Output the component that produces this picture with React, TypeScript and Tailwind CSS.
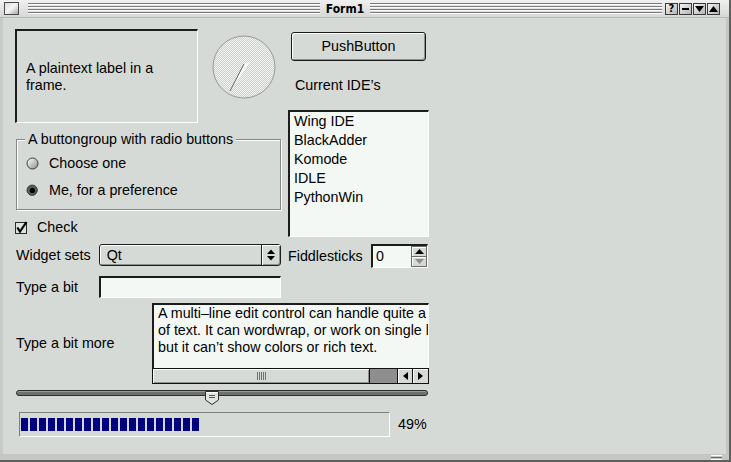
import React from 'react';

const sunken = 'border-t-2 border-l-2 border-b border-r border-t-[#1c1c1c] border-l-[#1c1c1c] border-b-white border-r-white';

function Stripes() {
  return (
    <div className="flex-1 h-[12px] bg-[image:repeating-linear-gradient(to_bottom,#7a7a7a_0px,#7a7a7a_1px,#fbfbfb_1px,#fbfbfb_2px,transparent_2px,transparent_3px)]" />
  );
}

function TitleButton({ children }: { children: React.ReactNode }) {
  return (
    <div className="w-[13px] h-[12px] border border-[#3a3a3a] bg-gradient-to-br from-[#f4f4f4] to-[#b4b4b4] flex items-center justify-center">
      {children}
    </div>
  );
}

function TitleBar() {
  return (
    <div className="h-[18px] flex items-center pl-[4px] pr-[9px] bg-gradient-to-b from-[#f0f0f0] to-[#d6d8d6] border-b border-[#b8bab8]">
      <div className="w-[15px] h-[13px] border border-[#4a4a4a] bg-gradient-to-br from-[#dcdcdc] via-[#f4f4f4] to-[#a8a8a8]" />
      <div className="ml-[9px] flex-1 flex items-center">
        <Stripes />
        <span className="mx-[6px] font-['DejaVu_Sans_Condensed','DejaVu_Sans',sans-serif] font-bold text-[12px] leading-[14px] [font-stretch:condensed]">
          Form1
        </span>
        <Stripes />
      </div>
      <div className="ml-[3px] flex gap-[1px]">
        <TitleButton>
          <span className="text-[10px] leading-[10px] font-bold font-['DejaVu_Sans',sans-serif]">?</span>
        </TitleButton>
        <TitleButton>
          <div className="w-[7px] h-[2px] bg-black" />
        </TitleButton>
        <TitleButton>
          <svg width="9" height="6" viewBox="0 0 9 6"><path d="M0 0 H9 L4.5 6 Z" fill="#000" /></svg>
        </TitleButton>
        <TitleButton>
          <svg width="9" height="6" viewBox="0 0 9 6"><path d="M0 6 H9 L4.5 0 Z" fill="#000" /></svg>
        </TitleButton>
      </div>
    </div>
  );
}

function Dial() {
  return (
    <svg width="64" height="64" viewBox="0 0 64 64">
      <defs>
        <pattern id="dialhatch" width="2" height="2" patternUnits="userSpaceOnUse">
          <rect width="2" height="2" fill="#f2f4f2" />
          <rect width="1" height="1" fill="#cdd1cd" />
          <rect x="1" y="1" width="1" height="1" fill="#cdd1cd" />
        </pattern>
      </defs>
      <circle cx="32" cy="32" r="31" fill="url(#dialhatch)" stroke="#8e908e" strokeWidth="0.9" />
      <polygon points="32,29 38,27 18,56" fill="#fafafa" />
      <line x1="32" y1="29" x2="18" y2="56" stroke="#555" strokeWidth="0.9" />
    </svg>
  );
}

function Radio({ checked }: { checked?: boolean }) {
  return (
    <svg width="13" height="13" viewBox="0 0 13 13">
      <defs>
        <linearGradient id="radioOff" x1="0" y1="0" x2="1" y2="1">
          <stop offset="0" stopColor="#ffffff" />
          <stop offset="1" stopColor="#8e8e8e" />
        </linearGradient>
      </defs>
      {checked ? (
        <>
          <circle cx="6.5" cy="6.5" r="5.8" fill="#ffffff" />
          <circle cx="6.2" cy="6.2" r="5.2" fill="#5c5c5c" stroke="#1e1e1e" strokeWidth="0.8" />
          <circle cx="6.4" cy="6.4" r="2.6" fill="#000" />
        </>
      ) : (
        <circle cx="6.5" cy="6.5" r="5.5" fill="url(#radioOff)" stroke="#2a2a2a" strokeWidth="0.9" />
      )}
    </svg>
  );
}

function CheckBox() {
  return (
    <svg width="13" height="13" viewBox="0 0 13 13">
      <rect x="0.5" y="1.5" width="11" height="11" fill="#dfe3df" stroke="#2a2a2a" />
      <path d="M2.3 6.5 L5 10.5 L11.5 1" stroke="#000" strokeWidth="2.2" fill="none" />
    </svg>
  );
}

function ComboBox() {
  return (
    <div className="w-[183px] h-[22px] rounded-[3px] border border-[#1e1e1e] flex shadow-[inset_1px_1px_0_#fff,inset_-1px_-1px_0_#8e908e]">
      <div className="flex-1 pl-[7px] flex items-center">Qt</div>
      <div className="w-[19px] border-l border-[#1e1e1e] flex items-center justify-center shadow-[inset_1px_1px_0_#fff]">
        <svg width="8" height="12" viewBox="0 0 8 12">
          <path d="M0 5 H8 L4 0.5 Z" fill="#000" />
          <path d="M0 7 H8 L4 11.5 Z" fill="#000" />
        </svg>
      </div>
    </div>
  );
}

function SpinBox() {
  return (
    <div className="w-[57px] h-[24px] flex border-t-2 border-l-2 border-t-[#1c1c1c] border-l-[#1c1c1c] border-b border-r border-b-white border-r-white bg-[#f4f8f4]">
      <div className="flex-1 pl-[3px] flex items-center">0</div>
      <div className="w-[16px] flex flex-col">
        <div className="flex-1 border border-[#6a6a6a] bg-[#d6dad6] shadow-[inset_1px_1px_0_#fff] flex items-center justify-center">
          <svg width="9" height="5" viewBox="0 0 9 5"><path d="M0 5 H9 L4.5 0 Z" fill="#000" /></svg>
        </div>
        <div className="flex-1 border border-t-0 border-[#6a6a6a] bg-[#d6dad6] shadow-[inset_1px_1px_0_#fff] flex items-center justify-center">
          <svg width="9" height="5" viewBox="0 0 9 5"><path d="M0 0 H9 L4.5 5 Z" fill="#8c8c8c" /></svg>
        </div>
      </div>
    </div>
  );
}

function HScrollBar() {
  return (
    <div className="h-[16px] flex border border-[#111] bg-[#d6dad6]">
      <div className="w-[217px] flex items-center justify-center shadow-[inset_1px_1px_0_#fff,inset_-1px_-1px_0_#8e908e] border-r border-[#111]">
        <div className="flex gap-[1px]">
          {[0, 1, 2, 3, 4].map((i) => (
            <div key={i} className="w-[1px] h-[8px] bg-[#707070]" />
          ))}
        </div>
      </div>
      <div className="w-[27px] bg-[#8e8e8e]" />
      <div className="w-[15px] border-l border-[#111] flex items-center justify-center shadow-[inset_1px_1px_0_#fff]">
        <svg width="5" height="8" viewBox="0 0 5 8"><path d="M5 0 V8 L0 4 Z" fill="#000" /></svg>
      </div>
      <div className="flex-1 border-l border-[#111] flex items-center justify-center shadow-[inset_1px_1px_0_#fff]">
        <svg width="5" height="8" viewBox="0 0 5 8"><path d="M0 0 V8 L5 4 Z" fill="#000" /></svg>
      </div>
    </div>
  );
}

function Slider() {
  return (
    <div className="relative ml-[1px] w-[412px] h-[16px]">
      <div className="mt-[5px] h-[6px] rounded-full border border-[#2e2e2e] bg-[#6e706e] shadow-[inset_0_1px_0_#9a9a9a]" />
      {/* handle sits on top of the groove */}
      <svg className="absolute left-[188px] top-0" width="16" height="16" viewBox="0 0 16 16">
        <path d="M1.5 1.5 H14.5 V10 L8 14.5 L1.5 10 Z" fill="#e2e4e2" stroke="#2e2e2e" />
        <path d="M2.5 2.5 H13.5" stroke="#fff" />
        <line x1="5" y1="5.5" x2="11" y2="5.5" stroke="#555" />
        <line x1="5" y1="7.5" x2="11" y2="7.5" stroke="#555" />
      </svg>
    </div>
  );
}

function ProgressBar() {
  const chunks = Array.from({ length: 20 });
  return (
    <div className="flex items-center">
      <div className="ml-[4px] w-[371px] h-[25px] border border-t-[#7e807e] border-l-[#7e807e] border-b-white border-r-white flex items-center pl-[1px]">
        <div className="flex gap-[2px]">
          {chunks.map((_, i) => (
            <div key={i} className="w-[7px] h-[13px] bg-[#000080]" />
          ))}
        </div>
      </div>
      <span className="ml-[8px]">49%</span>
    </div>
  );
}

export default function App() {
  const ides = ['Wing IDE', 'BlackAdder', 'Komode', 'IDLE', 'PythonWin'];

  return (
    <div className="w-[731px] h-[462px] bg-[#5e605e] font-['Liberation_Sans',Arial,sans-serif] text-[14.3px] leading-[17px] text-black">
      <div className="w-[729px] h-[460px] flex flex-col bg-[#c4c6c4]">
        <TitleBar />
        <div className="flex-1 border-l-[3px] border-r-[3px] border-l-[#c8cac8] border-r-[#c4c6c4] bg-[#d6dad6] pl-[12px] pt-[11px]">
          {/* upper two columns */}
          <div className="flex items-start">
            <div className="w-[266px] flex flex-col">
              <div className="flex items-start">
                <div className={`w-[183px] h-[94px] ${sunken} flex items-center px-[9px]`}>
                  A plaintext label in a frame.
                </div>
                <div className="ml-[14px] mt-[6px]">
                  <Dial />
                </div>
              </div>

              <fieldset className="mt-[8px] ml-[1px] w-[265px] border border-[#868886] shadow-[inset_1px_1px_0_#fff,1px_1px_0_#fff] pb-[5px]">
                <legend className="ml-[8px] px-[3px] bg-[#d6dad6] leading-[17px]">A buttongroup with radio buttons</legend>
                <div className="mt-[2px] h-[27px] flex items-center pl-[9px] gap-[10px]">
                  <Radio />
                  <span>Choose one</span>
                </div>
                <div className="h-[27px] flex items-center pl-[9px] gap-[10px]">
                  <Radio checked />
                  <span>Me, for a preference</span>
                </div>
              </fieldset>

              <div className="mt-[7px] h-[20px] flex items-center gap-[9px]">
                <CheckBox />
                <span>Check</span>
              </div>

              <div className="mt-[7px] h-[22px] flex items-center">
                <span className="w-[84px] pl-[1px]">Widget sets</span>
                <ComboBox />
              </div>
            </div>

            <div className="ml-[7px] w-[141px] flex flex-col">
              <button className="mt-[3px] ml-[3px] w-[135px] h-[29px] rounded-[3px] border border-[#1a1a1a] bg-[#d6dad6] shadow-[inset_1px_1px_0_#fff,inset_-1px_-1px_0_#8e908e]">
                PushButton
              </button>
              <div className="mt-[16px] ml-[7px]">Current IDE’s</div>
              <div className={`mt-[16px] h-[127px] ${sunken} bg-[#f4f8f4] pl-[4px] leading-[19px]`}>
                {ides.map((ide) => (
                  <div key={ide}>{ide}</div>
                ))}
              </div>
              <div className="mt-[7px] h-[24px] flex items-center">
                <span className="w-[83px]">Fiddlesticks</span>
                <SpinBox />
              </div>
            </div>
          </div>

          <div className="mt-[8px] h-[22px] flex items-center">
            <span className="w-[84px] pl-[1px]">Type a bit</span>
            <div className={`w-[182px] h-[22px] ${sunken} bg-[#f4f8f4]`} />
          </div>

          <div className="mt-[5px] flex items-center">
            <span className="w-[137px] pl-[1px]">Type a bit more</span>
            <div className="w-[277px] flex flex-col">
              <div className={`h-[65px] ${sunken} border-b-0 bg-[#f4f8f4] pl-[4px] overflow-hidden whitespace-pre`}>
                {'A multi–line edit control can handle quite a lot\nof text. It can wordwrap, or work on single lines\nbut it can’t show colors or rich text.'}
              </div>
              <HScrollBar />
            </div>
          </div>

          <div className="mt-[6px]">
            <Slider />
          </div>

          <div className="mt-[6px]">
            <ProgressBar />
          </div>
        </div>
        <div className="h-[6px] flex justify-end items-center pr-[7px]">
          <div className="flex flex-col gap-[1px]">
            <div className="w-[11px] h-[1px] bg-white" />
            <div className="w-[11px] h-[1px] bg-[#6a6a6a]" />
            <div className="w-[11px] h-[1px] bg-white" />
          </div>
        </div>
      </div>
    </div>
  );
}
